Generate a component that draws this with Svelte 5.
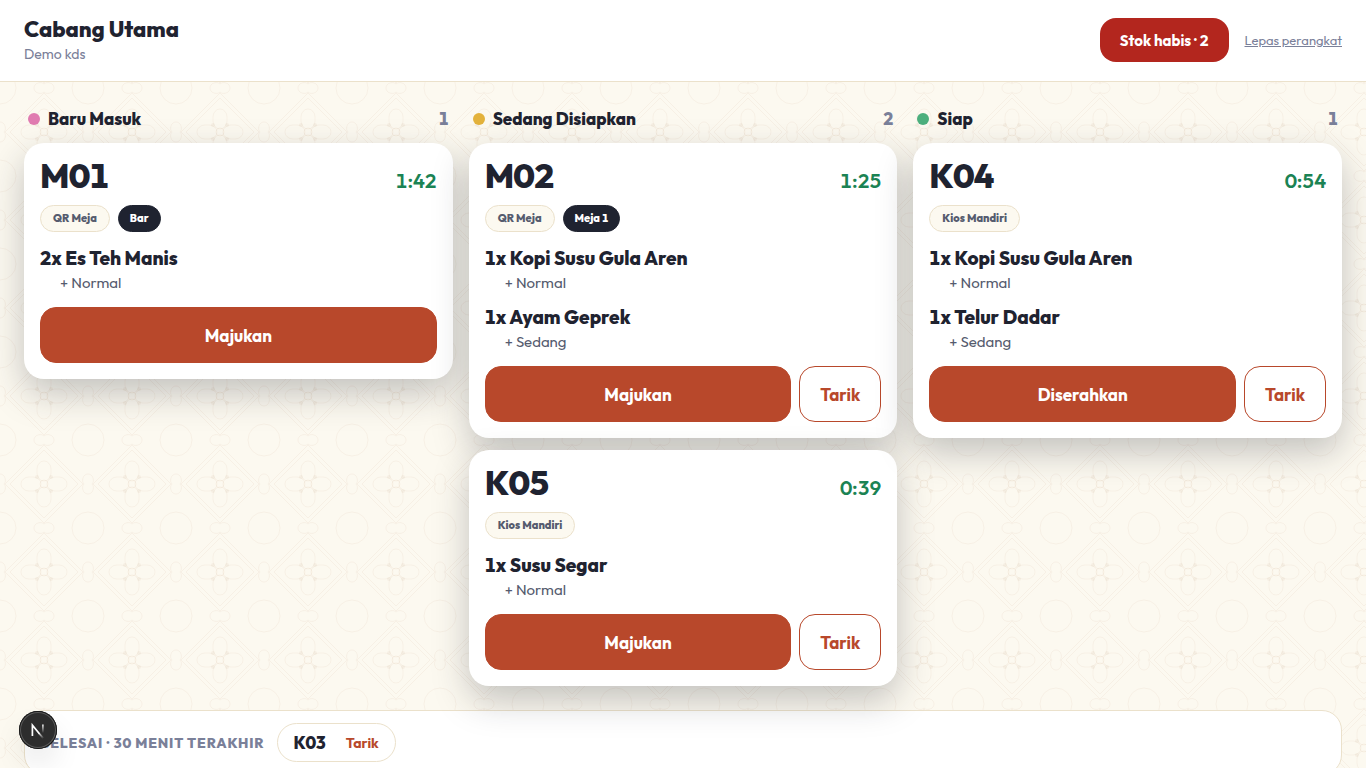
<script lang="ts">
	type Item = { qty: number; name: string; modifier: string };
	type Ticket = { code: string; age: string; source: string; place?: string; items: Item[]; recall?: boolean };
	type Column = { id: string; title: string; action: string; tickets: Ticket[] };

	const columns: Column[] = [
		{
			id: 'new',
			title: 'Baru Masuk',
			action: 'Majukan',
			tickets: [
				{
					code: 'M01',
					age: '1:42',
					source: 'QR Meja',
					place: 'Bar',
					items: [{ qty: 2, name: 'Es Teh Manis', modifier: 'Normal' }]
				}
			]
		},
		{
			id: 'preparing',
			title: 'Sedang Disiapkan',
			action: 'Majukan',
			tickets: [
				{
					code: 'M02',
					age: '1:25',
					source: 'QR Meja',
					place: 'Meja 1',
					recall: true,
					items: [
						{ qty: 1, name: 'Kopi Susu Gula Aren', modifier: 'Normal' },
						{ qty: 1, name: 'Ayam Geprek', modifier: 'Sedang' }
					]
				},
				{
					code: 'K05',
					age: '0:39',
					source: 'Kios Mandiri',
					recall: true,
					items: [{ qty: 1, name: 'Susu Segar', modifier: 'Normal' }]
				}
			]
		},
		{
			id: 'ready',
			title: 'Siap',
			action: 'Diserahkan',
			tickets: [
				{
					code: 'K04',
					age: '0:54',
					source: 'Kios Mandiri',
					recall: true,
					items: [
						{ qty: 1, name: 'Kopi Susu Gula Aren', modifier: 'Normal' },
						{ qty: 1, name: 'Telur Dadar', modifier: 'Sedang' }
					]
				}
			]
		}
	];

	const done = ['K03'];
	const soldOut = 2;
</script>

<header class="topbar">
	<div>
		<h1>Cabang Utama</h1>
		<p class="device">Demo kds</p>
	</div>
	<div class="topbar-actions">
		<button class="sold-out" type="button">Stok habis · {soldOut}</button>
		<button class="unlink" type="button">Lepas perangkat</button>
	</div>
</header>

<main>
	<div class="board">
		{#each columns as column (column.id)}
			<section class="column">
				<div class="column-head">
					<span class="dot {column.id}"></span>
					<h2>{column.title}</h2>
					<span class="count">{column.tickets.length}</span>
				</div>
				{#each column.tickets as ticket (ticket.code)}
					<article class="ticket">
						<div class="ticket-head">
							<h3>{ticket.code}</h3>
							<span class="age">{ticket.age}</span>
						</div>
						<div class="tags">
							<span class="tag">{ticket.source}</span>
							{#if ticket.place}<span class="tag dark">{ticket.place}</span>{/if}
						</div>
						<ul class="items">
							{#each ticket.items as item (item.name)}
								<li>
									<p class="item-name">{item.qty}x {item.name}</p>
									<p class="modifier">+ {item.modifier}</p>
								</li>
							{/each}
						</ul>
						<div class="actions">
							<button class="btn primary" type="button">{column.action}</button>
							{#if ticket.recall}<button class="btn outline" type="button">Tarik</button>{/if}
						</div>
					</article>
				{/each}
			</section>
		{/each}
	</div>

	<section class="done">
		<h2>Selesai · 30 menit terakhir</h2>
		{#each done as code (code)}
			<div class="done-pill">
				<strong>{code}</strong>
				<button type="button">Tarik</button>
			</div>
		{/each}
	</section>
</main>

<button class="dev-badge" type="button" aria-label="Dev tools">
	<svg width="38" height="38" viewBox="0 0 38 38" fill="none">
		<defs>
			<linearGradient id="diag" x1="20" y1="21" x2="25" y2="27" gradientUnits="userSpaceOnUse">
				<stop stop-color="#fff" />
				<stop offset="1" stop-color="#fff" stop-opacity="0" />
			</linearGradient>
			<linearGradient id="stem" x1="24" y1="13" x2="24" y2="22" gradientUnits="userSpaceOnUse">
				<stop stop-color="#fff" />
				<stop offset="1" stop-color="#fff" stop-opacity="0" />
			</linearGradient>
		</defs>
		<path d="M13.4 25V14.2L20.4 22.8" stroke="#fff" stroke-width="1.7" />
		<path d="M20 22.3 24.6 27.6" stroke="url(#diag)" stroke-width="1.7" />
		<path d="M23.9 13.4v8.8" stroke="url(#stem)" stroke-width="1.6" />
	</svg>
</button>

<style>
	:global(html) {
		scrollbar-width: none;
	}
	:global(body) {
		margin: 0;
		background-color: #fcf9f0;
		background-image: url("data:image/svg+xml,%3Csvg xmlns='http://www.w3.org/2000/svg' width='88' height='88'%3E%3Cg fill='none' stroke='%23b5835a' stroke-opacity='.07'%3E%3Cpath d='M44 5 83 44 44 83 5 44Z'/%3E%3Cpath d='M44 10 78 44 44 78 10 44Z'/%3E%3Crect x='37' y='21' width='14' height='20' rx='7' ry='8'/%3E%3Crect x='37' y='47' width='14' height='20' rx='7' ry='8'/%3E%3Crect x='21' y='37' width='20' height='14' rx='8' ry='7'/%3E%3Crect x='47' y='37' width='20' height='14' rx='8' ry='7'/%3E%3Ccircle cx='44' cy='44' r='4'/%3E%3Ccircle r='16'/%3E%3Ccircle cx='88' r='16'/%3E%3Ccircle cy='88' r='16'/%3E%3Ccircle cx='88' cy='88' r='16'/%3E%3Cpath id='h' d='M44 4C41 7 34 5 34 0C34-5 41-7 44-4C47-7 54-5 54 0C54 5 47 7 44 4Z'/%3E%3Cuse href='%23h' y='88'/%3E%3Cpath id='v' d='M4 44C7 41 5 34 0 34C-5 34-7 41-4 44C-7 47-5 54 0 54C5 54 7 47 4 44Z'/%3E%3Cuse href='%23v' x='88'/%3E%3C/g%3E%3Cg fill='%23b5835a' fill-opacity='.08'%3E%3Ccircle cx='37' cy='37' r='2'/%3E%3Ccircle cx='51' cy='37' r='2'/%3E%3Ccircle cx='37' cy='51' r='2'/%3E%3Ccircle cx='51' cy='51' r='2'/%3E%3C/g%3E%3C/svg%3E");
		color: #1f2330;
		font-family: Outfit, Urbanist, Lato, sans-serif;
		font-variant-numeric: tabular-nums;
	}
	h1,
	h2,
	h3,
	p,
	ul {
		margin: 0;
		padding: 0;
	}
	ul {
		list-style: none;
	}
	button {
		font: inherit;
		font-variant-numeric: inherit;
		cursor: pointer;
	}
	.topbar {
		display: flex;
		align-items: center;
		justify-content: space-between;
		padding: 15px 24px 16px;
		background: #fff;
		border-bottom: 1px solid #ebe1cb;
	}
	h1 {
		font-size: 22px;
		font-weight: 800;
		line-height: 28px;
	}
	.device {
		font-size: 14px;
		line-height: 22px;
		color: #7a8099;
	}
	.topbar-actions {
		display: flex;
		align-items: center;
		gap: 16px;
	}
	.sold-out {
		height: 44px;
		padding: 0 20px;
		border: 0;
		border-radius: 16px;
		background: #b3261e;
		color: #fff;
		font-size: 15px;
		font-weight: 700;
	}
	.unlink {
		padding: 0;
		border: 0;
		background: none;
		color: #7a8099;
		font-size: 13px;
		text-decoration: underline;
	}
	main {
		padding: 24px;
	}
	.board {
		display: grid;
		grid-template-columns: repeat(3, minmax(0, 1fr));
		gap: 16px;
		align-items: start;
	}
	.column {
		display: flex;
		flex-direction: column;
		gap: 12px;
	}
	.column-head {
		display: flex;
		align-items: center;
		gap: 8px;
		padding: 0 4px;
		line-height: 25px;
	}
	.column-head h2 {
		flex: 1;
		font-size: 17px;
		font-weight: 800;
	}
	.dot {
		width: 12px;
		height: 12px;
		border-radius: 50%;
	}
	.dot.new {
		background: #e07bb0;
	}
	.dot.preparing {
		background: #e3b23c;
	}
	.dot.ready {
		background: #4caf7d;
	}
	.count {
		color: #7a8099;
		font-size: 17px;
		font-weight: 800;
	}
	.ticket {
		display: flex;
		flex-direction: column;
		gap: 12px;
		padding: 16px;
		border-radius: 20px;
		background: #fff;
		box-shadow: 0 14px 36px rgba(31, 35, 48, 0.26);
	}
	.ticket-head {
		display: flex;
		align-items: baseline;
		justify-content: space-between;
	}
	h3 {
		font-size: 34px;
		font-weight: 800;
		line-height: 34px;
	}
	.age {
		color: #1b8354;
		font-size: 20px;
		font-weight: 600;
		line-height: 20px;
	}
	.tags {
		display: flex;
		gap: 8px;
	}
	.tag {
		padding: 0 12px;
		border: 1px solid #ebe1cb;
		border-radius: 14px;
		background: #fcf9f0;
		color: #555b6e;
		font-size: 11px;
		font-weight: 800;
		line-height: 25px;
	}
	.tag.dark {
		padding: 0 11px;
		border-color: #1f2330;
		background: #1f2330;
		color: #fff;
	}
	.items {
		display: flex;
		flex-direction: column;
		gap: 10px;
		padding-bottom: 2px;
	}
	.item-name {
		font-size: 19px;
		font-weight: 800;
		line-height: 28px;
	}
	.modifier {
		padding-left: 20px;
		color: #555b6e;
		font-size: 15px;
		line-height: 21px;
	}
	.actions {
		display: flex;
		gap: 8px;
	}
	.btn {
		height: 56px;
		padding: 0 20px;
		border: 1px solid #b8482b;
		border-radius: 16px;
		font-size: 17px;
		font-weight: 700;
	}
	.btn.primary {
		flex: 1;
		background: #b8482b;
		color: #fff;
	}
	.btn.outline {
		background: #fff;
		color: #b8482b;
	}
	.done {
		display: flex;
		align-items: center;
		gap: 12px;
		margin-top: 24px;
		padding: 12px 16px;
		border: 1px solid #ebe1cb;
		border-radius: 20px;
		background: #fff;
	}
	.done h2 {
		color: #7a8099;
		font-size: 14px;
		font-weight: 800;
		letter-spacing: 0.06em;
		text-transform: uppercase;
	}
	.done-pill {
		display: flex;
		align-items: center;
		gap: 20px;
		height: 37px;
		padding: 0 16px;
		border: 1px solid #ebe1cb;
		border-radius: 20px;
	}
	.done-pill strong {
		font-size: 17px;
		font-weight: 800;
	}
	.done-pill button {
		padding: 0;
		border: 0;
		background: none;
		color: #b8482b;
		font-size: 14px;
		font-weight: 700;
	}
	.dev-badge {
		position: fixed;
		bottom: 19px;
		left: 19px;
		display: flex;
		padding: 0;
		border: 0;
		border-radius: 50%;
		background: #2d2d2d;
		box-shadow:
			inset 0 0 0 1px #171717,
			inset 0 0 0 2px #5a5a5a,
			0 16px 32px -8px rgba(0, 0, 0, 0.24);
	}
</style>
